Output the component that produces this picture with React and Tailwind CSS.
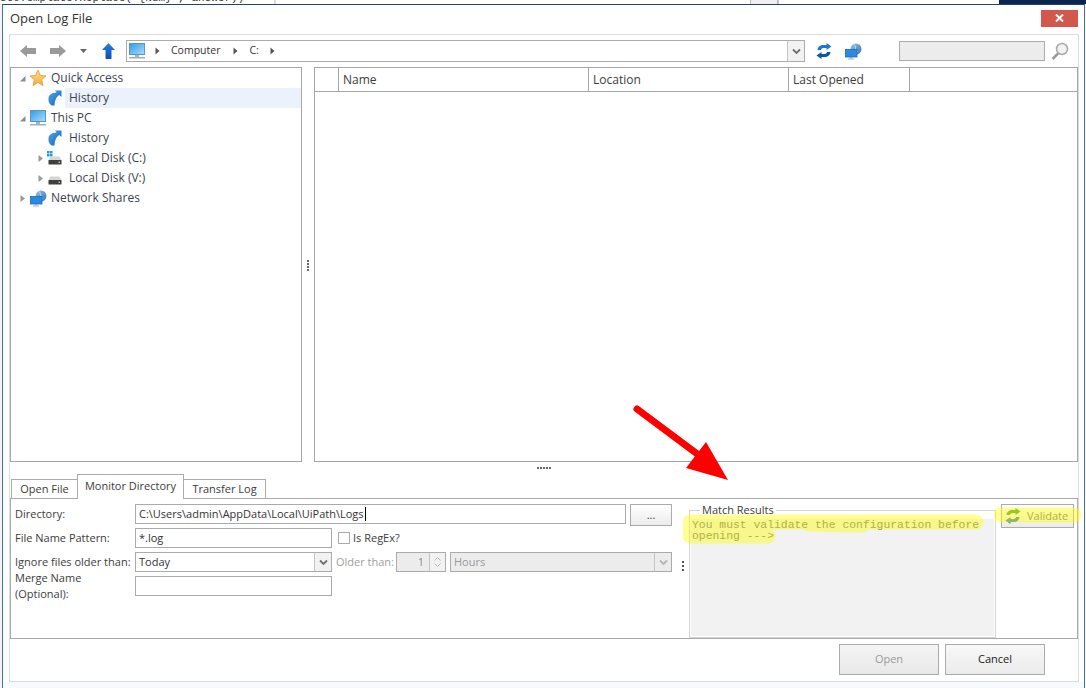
import React from 'react';

const Monitor = () => (
  <svg width="18" height="17" viewBox="0 0 18 17">
    <defs>
      <linearGradient id="monFill" x1="0" y1="0" x2="1" y2="1">
        <stop offset="0" stopColor="#2f9be8" />
        <stop offset="1" stopColor="#a9defa" />
      </linearGradient>
    </defs>
    <rect x="1.5" y="0.5" width="15" height="11" fill="url(#monFill)" stroke="#5f94bd" />
    <rect x="7" y="12" width="4" height="2" fill="#a7b4bf" />
    <rect x="1" y="14" width="16" height="1.5" fill="#9db0bf" />
  </svg>
);

const Shortcut = () => (
  <svg width="14" height="16" viewBox="0 0 14 16">
    <defs>
      <linearGradient id="cutFill" x1="0" y1="0" x2="1" y2="1">
        <stop offset="0" stopColor="#52a6ea" />
        <stop offset="1" stopColor="#1464b4" />
      </linearGradient>
    </defs>
    <path d="M7 0.5L13.5 0.5L13.5 7L11.2 5C8.5 7 7 9.5 6.5 15.5L3.5 15.5C1.2 13.5 0 11 0.5 8C1 5 3.5 3 8.6 2.6Z" fill="url(#cutFill)" />
  </svg>
);

const Star = () => (
  <svg width="18" height="18" viewBox="0 0 18 18">
    <defs>
      <linearGradient id="starFill" x1="0" y1="0" x2="0" y2="1">
        <stop offset="0" stopColor="#fbe08c" />
        <stop offset="1" stopColor="#f3ab3c" />
      </linearGradient>
    </defs>
    <path d="M9 1L11.3 6.4L17 6.9L12.7 10.7L14 16.6L9 13.5L4 16.6L5.3 10.7L1 6.9L6.7 6.4Z" fill="url(#starFill)" stroke="#dc9c3a" strokeWidth="0.8" />
  </svg>
);

const Disk = ({ windows }) => (
  <svg width="16" height="14" viewBox="0 0 16 14">
    {windows && (
      <g fill="#1c9be6">
        <rect x="0" y="0" width="2.5" height="2.5" />
        <rect x="3" y="0" width="2.5" height="2.5" />
        <rect x="0" y="3" width="2.5" height="2.5" />
        <rect x="3" y="3" width="2.5" height="2.5" />
      </g>
    )}
    <path d="M3 5.5L12.5 5.5L14.5 9L1.5 9Z" fill="#d6d6d6" />
    <rect x="1.5" y="9" width="13" height="4.5" rx="0.5" fill="#3f3f3f" />
    <rect x="11.5" y="10.5" width="1.5" height="1.5" fill="#8fe36b" />
  </svg>
);

const NetworkIcon = () => (
  <svg width="17" height="17" viewBox="0 0 17 17">
    <defs>
      <linearGradient id="netGlobe" x1="0" y1="0" x2="1" y2="1">
        <stop offset="0" stopColor="#9fc4e6" />
        <stop offset="1" stopColor="#2f74b8" />
      </linearGradient>
    </defs>
    <circle cx="11" cy="6" r="5.5" fill="url(#netGlobe)" />
    <path d="M9 1.5C10.5 3 11 5 10 7L13 9" stroke="#d8e8f5" strokeWidth="0.8" fill="none" />
    <rect x="0.5" y="6.5" width="11.5" height="7.5" fill="#2a8ae0" stroke="#1d69b3" strokeWidth="0.8" />
    <rect x="4.5" y="14" width="3" height="1.5" fill="#8ea9c0" />
    <rect x="3" y="15.5" width="6" height="1" fill="#a4b6c5" />
  </svg>
);

const Refresh = ({ a = '#1e78d2', b = '#0d55a8', size = 16 }) => (
  <svg width={size} height={size} viewBox="0 0 16 16">
    <path d="M1.5 7C1.8 3.5 4.2 2 7.5 2L10.5 2L10.5 0L15.5 3.5L10.5 7L10.5 5L7.5 5C6 5 5.2 5.8 5 7Z" fill={a} />
    <path d="M14.5 9C14.2 12.5 11.8 14 8.5 14L5.5 14L5.5 16L0.5 12.5L5.5 9L5.5 11L8.5 11C10 11 10.8 10.2 11 9Z" fill={b} />
  </svg>
);

const Chevron = ({ color = '#666' }) => (
  <svg width="9" height="7" viewBox="0 0 9 7">
    <path d="M1 1.5L4.5 5L8 1.5" fill="none" stroke={color} strokeWidth="1.8" />
  </svg>
);

const Expander = ({ open }) => (
  <svg width="7" height="9" viewBox="0 0 7 9">
    {open ? <path d="M6.5 2L6.5 7.5L1 7.5Z" fill="#8a8a8a" /> : <path d="M1.5 1L6 4.5L1.5 8Z" fill="#9a9a9a" />}
  </svg>
);

const Crumb = () => (
  <svg width="5" height="8" viewBox="0 0 5 8">
    <path d="M0.5 0.5L4.5 4L0.5 7.5Z" fill="#555" />
  </svg>
);

const TreeRow = ({ level, expander, icon, label, selected }) => (
  <div className={`flex h-5 items-center ${level ? 'pl-[23px]' : 'pl-[5px]'}`}>
    <span className="flex w-3 justify-center">{expander && <Expander open={expander === 'open'} />}</span>
    <span className={`flex justify-center ${level ? 'w-[18px]' : 'w-5'}`}>{icon}</span>
    {level ? (
      <span className={`ml-px flex h-5 flex-1 items-center pl-1 ${selected ? 'bg-[#ebf2fb]' : ''}`}>{label}</span>
    ) : (
      <span className="ml-[3px]">{label}</span>
    )}
  </div>
);

const Field = ({ className, children }) => (
  <div className={`flex h-5 items-center border border-[#ababab] bg-white pl-[3px] text-[#333] ${className}`}>{children}</div>
);

const ComboArrow = ({ disabled }) => (
  <span className={`flex h-full w-[17px] shrink-0 items-center justify-center border-l border-[#c4c4c4] ${disabled ? 'bg-[#ececec]' : 'bg-[#f2f2f2]'}`}>
    <Chevron color={disabled ? '#b5b5b5' : '#707070'} />
  </span>
);

const Label = ({ children }) => <span className="ml-1 w-[120px] shrink-0 text-[#3c3c3c]">{children}</span>;

const App = () => {
  return (
    <div className="relative flex h-[688px] w-[1086px] flex-col overflow-hidden bg-[#f4f4f4] font-['Open_Sans',sans-serif]">
      {/* window behind the dialog, only its last few pixels show */}
      <div className="flex h-1 shrink-0 overflow-hidden bg-white">
        <div className="w-[276px] shrink-0 border-r-2 border-[#dcdcdc] font-['Liberation_Mono',monospace] text-[11px] leading-[10px] text-[#333]">
          <div className="-mt-[7px] whitespace-nowrap">stoTemplate.Replace('{'{'}Num{'}'}', answer))</div>
        </div>
        <div className="w-[474px] shrink-0" />
        <div className="w-[28px] shrink-0 border-x border-[#b8b8b8] bg-[#f0f0f0]" />
        <div className="w-[221px] shrink-0 border-l border-[#c8c8c8]" />
        <div className="flex-1 bg-[#0c2450]" />
      </div>

      <div className="ml-[2px] flex w-[1083px] flex-1 flex-col border-x border-t border-x-[#3b78a8] border-t-[#1f4666] bg-white">
        <div className="flex h-[29px] shrink-0 items-center justify-between pr-[6px] pl-[7px]">
          <span className="-mt-[1px] text-[13px] text-[#333]">Open Log File</span>
          <button className="-mt-[3px] flex h-[17px] w-[37px] items-center justify-center bg-[#d2584d]">
            <svg width="9" height="8" viewBox="0 0 9 8">
              <path d="M1 0.5L8 7.5M8 0.5L1 7.5" stroke="#fff" strokeWidth="2" />
            </svg>
          </button>
        </div>

        <div className="ml-[6px] flex h-[648px] w-[1070px] shrink-0 flex-col border border-[#dcdcdc] bg-white text-[11px]">
          {/* toolbar */}
          <div className="flex h-8 shrink-0 items-center">
            <svg className="ml-[10px]" width="16" height="12" viewBox="0 0 16 12">
              <path d="M0 6L7 0L7 3L16 3L16 9L7 9L7 12Z" fill="#9a9a9a" />
            </svg>
            <svg className="ml-[14px]" width="16" height="12" viewBox="0 0 16 12">
              <path d="M16 6L9 0L9 3L0 3L0 9L9 9L9 12Z" fill="#9a9a9a" />
            </svg>
            <svg className="ml-[14px]" width="7" height="4" viewBox="0 0 7 4">
              <path d="M0 0L7 0L3.5 4Z" fill="#666" />
            </svg>
            <svg className="ml-[15px]" width="13" height="16" viewBox="0 0 13 16">
              <defs>
                <linearGradient id="upFill" x1="0" y1="0" x2="0" y2="1">
                  <stop offset="0" stopColor="#2b7fe0" />
                  <stop offset="1" stopColor="#0b4fb0" />
                </linearGradient>
              </defs>
              <path d="M6.5 0L13 7L9.5 7L9.5 15C9.5 15.6 9 16 8.5 16L4.5 16C4 16 3.5 15.6 3.5 15L3.5 7L0 7Z" fill="url(#upFill)" />
            </svg>
            <div className="ml-[11px] flex h-[22px] w-[679px] items-center border border-[#ababab] text-[10.5px] text-[#333]">
              <span className="ml-[1px] flex"><Monitor /></span>
              <span className="ml-[9px] flex"><Crumb /></span>
              <span className="ml-[11px]">Computer</span>
              <span className="ml-[13px] flex"><Crumb /></span>
              <span className="ml-[11px]">C:</span>
              <span className="ml-[11px] flex"><Crumb /></span>
              <span className="flex-1" />
              <ComboArrow />
            </div>
            <span className="ml-[11px] flex"><Refresh /></span>
            <span className="ml-[13px] flex"><NetworkIcon /></span>
            <div className="ml-[37px] h-5 w-[146px] border border-[#ababab] bg-[#ececec]" />
            <svg className="ml-[6px]" width="18" height="18" viewBox="0 0 18 18">
              <circle cx="11" cy="7" r="5.5" fill="#f2f2f2" stroke="#a8a8a8" strokeWidth="1.5" />
              <path d="M7 11.5L1.5 17" stroke="#9a9a9a" strokeWidth="2.5" />
            </svg>
          </div>

          {/* tree and file list */}
          <div className="flex h-[395px] shrink-0">
            <div className="w-[292px] shrink-0 border border-[#a6a6a6] text-[12px] text-[#3c4350]">
              <TreeRow expander="open" icon={<Star />} label="Quick Access" />
              <TreeRow level={1} icon={<Shortcut />} label="History" selected />
              <TreeRow expander="open" icon={<Monitor />} label="This PC" />
              <TreeRow level={1} icon={<Shortcut />} label="History" />
              <TreeRow level={1} expander="closed" icon={<Disk windows />} label="Local Disk (C:)" />
              <TreeRow level={1} expander="closed" icon={<Disk />} label="Local Disk (V:)" />
              <TreeRow expander="closed" icon={<NetworkIcon />} label="Network Shares" />
            </div>
            <div className="flex w-3 shrink-0 flex-col items-center justify-center gap-px pt-[1px]">
              {[0, 1, 2, 3].map((i) => <span key={i} className="h-[2px] w-[2px] bg-[#666]" />)}
            </div>
            <div className="flex-1 border border-[#a6a6a6]">
              <div className="flex h-6 border-b border-[#a6a6a6] text-[12px] text-[#3c3c3c]">
                <div className="w-6 border-r border-[#a6a6a6]" />
                <div className="flex w-[250px] items-center border-r border-[#a6a6a6] pl-1">Name</div>
                <div className="flex w-[200px] items-center border-r border-[#a6a6a6] pl-1">Location</div>
                <div className="flex w-[121px] items-center border-r border-[#a6a6a6] pl-1">Last Opened</div>
              </div>
            </div>
          </div>

          <div className="flex h-3 shrink-0 items-center justify-center gap-px pr-[-2px]">
            {[0, 1, 2, 3, 4].map((i) => <span key={i} className="h-[2px] w-[2px] bg-[#666]" />)}
          </div>

          {/* tab strip */}
          <div className="flex h-6 shrink-0 items-end pl-[1px] text-[#3c3c3c]">
            <div className="-mb-px flex h-5 w-[67px] items-center justify-center border border-b-0 border-[#ababab] bg-white">Open File</div>
            <div className="relative z-10 -mb-px -ml-px flex h-[25px] w-[107px] items-start justify-center border border-b-0 border-[#ababab] bg-white pt-[3px]">Monitor Directory</div>
            <div className="-mb-px -ml-px flex h-5 w-[83px] items-center justify-center border border-b-0 border-[#ababab] bg-white">Transfer Log</div>
          </div>

          <div className="flex h-[141px] shrink-0 border border-[#ababab] bg-white pr-0">
            <div className="flex w-[678px] shrink-0 flex-col gap-1 pt-[5px]">
              <div className="flex h-5 items-start">
                <span className="flex h-5 items-center"><Label>Directory:</Label></span>
                <Field className="w-[491px]">
                  C:\Users\admin\AppData\Local\UiPath\Logs
                  <span className="ml-px h-[14px] w-px bg-black" />
                </Field>
                <button className="ml-1 h-[22px] w-[42px] border border-[#ababab] bg-gradient-to-b from-white to-[#ececec] text-[#444]">...</button>
              </div>
              <div className="flex h-5 items-center">
                <Label>File Name Pattern:</Label>
                <Field className="w-[197px]">*.log</Field>
                <span className="ml-[6px] h-3 w-3 border border-[#ababab] bg-white" />
                <span className="ml-[3px] text-[#3c3c3c]">Is RegEx?</span>
              </div>
              <div className="flex h-5 items-center">
                <Label>Ignore files older than:</Label>
                <Field className="w-[197px] pr-0">
                  <span className="flex-1">Today</span>
                  <ComboArrow />
                </Field>
                <span className="ml-1 w-[60px] text-[#a0a0a0]">Older than:</span>
                <div className="flex h-5 w-[50px] items-center border border-[#ababab] bg-[#ececec] text-[#8a8a8a]">
                  <span className="flex-1 pr-[5px] text-right">1</span>
                  <span className="flex h-full w-4 flex-col items-center justify-center gap-[2px] border-l border-[#c4c4c4] bg-[#f2f2f2]">
                    <svg width="7" height="4" viewBox="0 0 7 4"><path d="M0.5 3.5L3.5 0.5L6.5 3.5" fill="none" stroke="#b5b5b5" /></svg>
                    <svg width="7" height="4" viewBox="0 0 7 4"><path d="M0.5 0.5L3.5 3.5L6.5 0.5" fill="none" stroke="#b5b5b5" /></svg>
                  </span>
                </div>
                <div className="ml-1 flex h-5 w-[222px] items-center border border-[#ababab] bg-[#ececec] pl-[3px] text-[#9a9a9a]">
                  <span className="flex-1">Hours</span>
                  <ComboArrow disabled />
                </div>
                <span className="mt-2 ml-[10px] flex flex-col gap-[2px]">
                  {[0, 1, 2].map((i) => <span key={i} className="h-[2px] w-[2px] bg-[#555]" />)}
                </span>
              </div>
              <div className="flex h-5 items-center">
                <Label>Merge Name (Optional):</Label>
                <Field className="w-[197px]" />
              </div>
            </div>

            <fieldset className="mt-[3px] mb-[1px] flex h-[136px] w-[307px] shrink-0 flex-col border border-[#d4d4d4] bg-white px-px pb-px">
              <legend className="ml-[9px] px-[2px] text-[#3c3c3c]">Match Results</legend>
              <div className="h-full bg-[#f2f2f2] pt-px pl-px font-['Liberation_Mono',monospace] text-[11.4px] leading-[11px] text-[#777]">
                You must validate the configuration before opening ---&gt;
              </div>
            </fieldset>

            <button className="mt-[5px] ml-[5px] flex h-6 w-[73px] items-center border border-[#ababab] bg-gradient-to-b from-white to-[#ececec] pl-[3px] text-[#777]">
              <Refresh a="#4fa03c" b="#3e86b0" />
              <span className="ml-[6px]">Validate</span>
            </button>
          </div>

          {/* dialog buttons */}
          <div className="flex flex-1 items-start justify-end gap-[6px] pt-[5px] pr-[33px]">
            <button className="h-[31px] w-[100px] border border-[#ababab] bg-gradient-to-b from-[#f5f5f5] to-[#e8e8e8] text-[#9a9a9a]">Open</button>
            <button className="h-[31px] w-[100px] border border-[#ababab] bg-gradient-to-b from-[#f8f8f8] to-[#ebebeb] text-[#222]">Cancel</button>
          </div>
        </div>

        <div className="flex-1 bg-[#f6f9fe]" />
      </div>

      {/* annotations drawn on top of the screenshot */}
      <svg className="pointer-events-none absolute top-0 left-0" width="1086" height="688" viewBox="0 0 1086 688">
        <g opacity="0.42" stroke="#ffff00" strokeWidth="15" strokeLinecap="round" fill="none">
          <path d="M690 522L976 522M809 524L862 525" />
          <path d="M690 536L768 536M690 529L740 529" />
          <path d="M1001 515L1074 515" />
        </g>
        <path d="M637 409L700 456" stroke="#fe0000" strokeWidth="7" strokeLinecap="round" />
        <path d="M706 442L686 468L728 480Z" fill="#fe0000" />
      </svg>
    </div>
  );
};

export default App;
